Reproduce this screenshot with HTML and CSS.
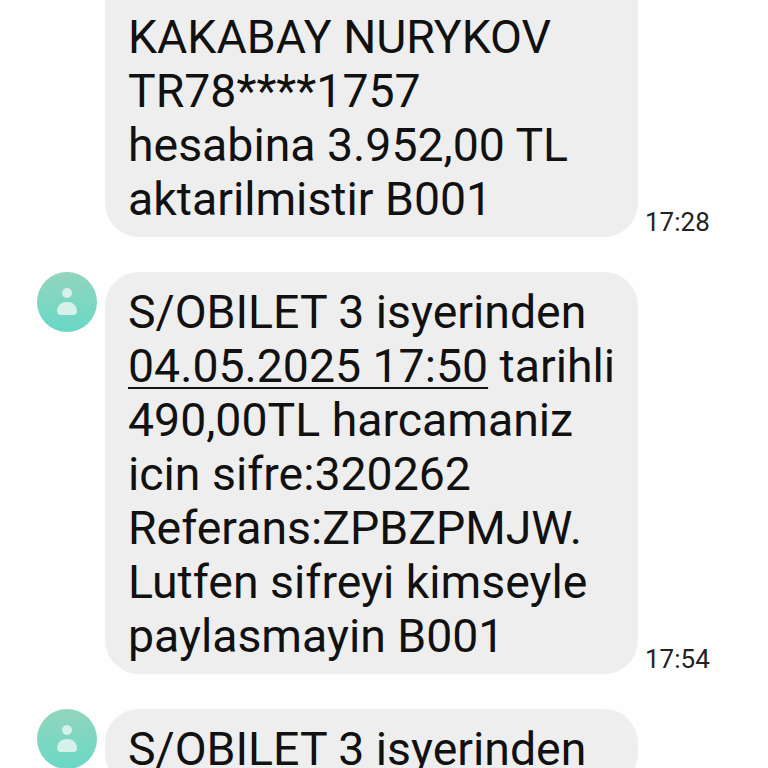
FILE: index.html
```html
<!DOCTYPE html>
<html>
<head>
    <title>Mesajlar</title>
    <link rel="stylesheet" href="styles.css">
</head>
<body>
    <div class="thread">
        <div class="message">
            <div class="avatar-slot"></div>
            <div class="bubble">
                <div class="clipped">&nbsp;</div>
                KAKABAY NURYKOV<br>
                TR78****1757<br>
                hesabina 3.952,00 TL<br>
                aktarilmistir B001
            </div>
            <div class="time">17:28</div>
        </div>

        <div class="message">
            <div class="avatar-slot">
                <div class="avatar">
                    <svg viewBox="0 0 60 60" width="60" height="60">
                        <circle cx="30" cy="21" r="5" fill="#d5f1e9"/>
                        <path d="M20 39c0-4 3-9 10-9s10 5 10 9c0 3-2 4-4 4H24c-2 0-4-1-4-4z" fill="#d5f1e9"/>
                    </svg>
                </div>
            </div>
            <div class="bubble">
                S/OBILET 3 isyerinden<br>
                <span class="link">04.05.2025 17:50</span> tarihli<br>
                490,00TL harcamaniz<br>
                icin sifre:320262<br>
                Referans:ZPBZPMJW.<br>
                Lutfen sifreyi kimseyle<br>
                paylasmayin B001
            </div>
            <div class="time">17:54</div>
        </div>

        <div class="message">
            <div class="avatar-slot">
                <div class="avatar">
                    <svg viewBox="0 0 60 60" width="60" height="60">
                        <circle cx="30" cy="21" r="5" fill="#d5f1e9"/>
                        <path d="M20 39c0-4 3-9 10-9s10 5 10 9c0 3-2 4-4 4H24c-2 0-4-1-4-4z" fill="#d5f1e9"/>
                    </svg>
                </div>
            </div>
            <div class="bubble">
                S/OBILET 3 isyerinden
            </div>
        </div>
    </div>
</body>
</html>
```

FILE: styles.css
```css
html, body {
    margin: 0;
    height: 100%;
    background: #fefefe;
    overflow: hidden;
}

.thread {
    display: flex;
    flex-direction: column;
    gap: 35px;
    margin-top: -57px;
    font-family: Roboto, sans-serif;
    color: #111;
}

.message {
    display: flex;
    align-items: flex-start;
}

.avatar-slot {
    width: 105px;
    flex-shrink: 0;
    display: flex;
    justify-content: flex-end;
    padding-right: 8px;
    box-sizing: border-box;
}

.avatar {
    width: 60px;
    height: 60px;
    border-radius: 50%;
    background: linear-gradient(#93d5bd, #68d8c6);
}

.avatar svg {
    display: block;
}

.bubble {
    width: 533px;
    box-sizing: border-box;
    padding: 13px 0 11px 23px;
    background: #eeeeee;
    border-radius: 34px;
    font-size: 46.4px;
    line-height: 54px;
    white-space: nowrap;
}

.link {
    text-decoration: underline;
    text-decoration-thickness: 2px;
    text-underline-offset: 5px;
}

.time {
    align-self: flex-end;
    margin-left: 7px;
    font-size: 26px;
    line-height: 30px;
    color: #222;
}
```
